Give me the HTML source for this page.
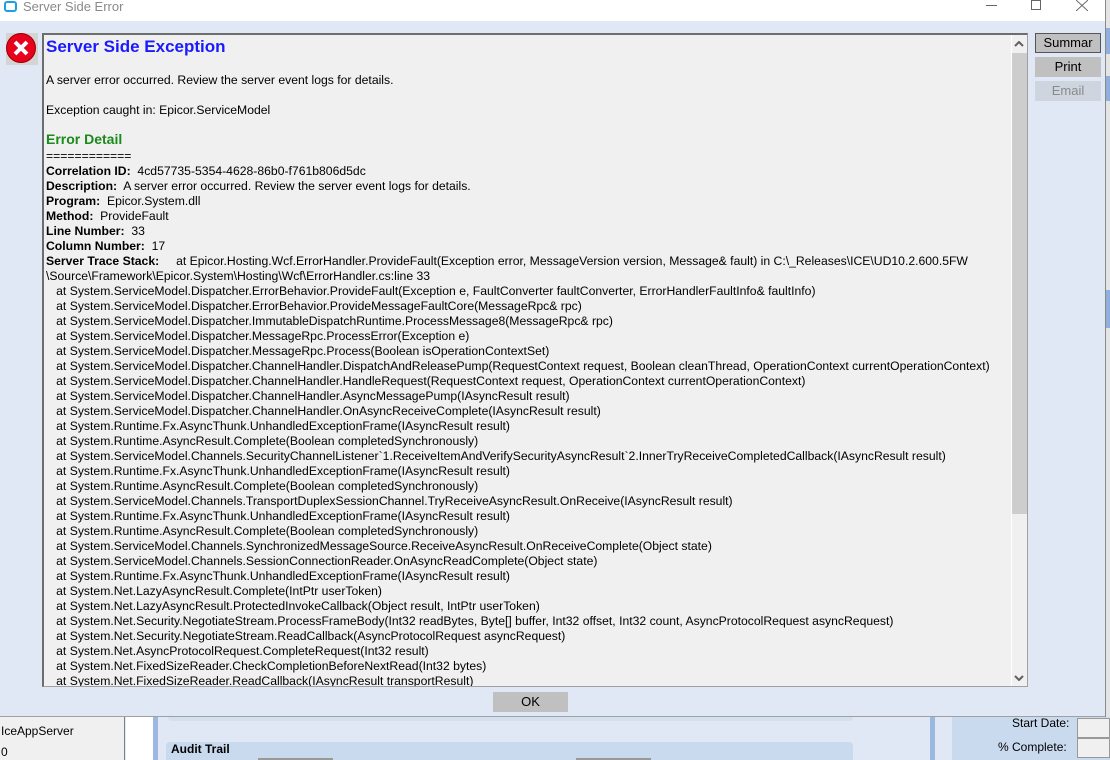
<!DOCTYPE html>
<html><head><meta charset="utf-8"><style>
*{margin:0;padding:0;box-sizing:border-box}
body{width:1110px;height:760px;overflow:hidden;position:relative;background:#dfe8f4;font-family:"Liberation Sans",Arial,sans-serif;font-size:12px;color:#000}
.a{position:absolute}
.box{left:42px;top:33px;width:986px;height:654px;background:#f0f0f0;border:1px solid #a0a0a0;border-top:2px solid #6d6d6d;border-left:2px solid #6d6d6d;overflow:hidden}
.tx{position:absolute;left:2px;white-space:nowrap;font-size:12.2px}
.fl{position:absolute;left:2px;top:114px;line-height:15px;white-space:pre;font-size:12.2px}
.fl b{font-weight:bold}
.btn{position:absolute;background:#c0c0c0;text-align:center;font-size:13px;line-height:19px}
</style></head><body>
<div class="a" style="left:0;top:0;width:1105px;height:21px;background:#fff"></div>
<div class="a" style="left:4px;top:1px;width:13px;height:11px;border:2px solid #1ba1e2;border-radius:3px;background:#fff"></div>
<div class="a" style="left:23px;top:-1px;font-size:13px;color:#8a8a8a">Server Side Error</div>
<div class="a" style="left:986px;top:5px;width:11px;height:1px;background:#666"></div>
<div class="a" style="left:1031px;top:0px;width:10px;height:10px;border:1px solid #666"></div>
<svg class="a" style="left:1076px;top:0" width="12" height="11"><path d="M0 0L12 11M12 0L0 11" stroke="#666" stroke-width="1"/></svg>
<div class="a" style="left:1105px;top:0;width:5px;height:717px;background:#e4e4e4;border-left:1px solid #8a8a8a"></div>
<div class="a" style="left:1106px;top:28px;width:4px;height:26px;background:#8fb0dc"></div>
<div class="a" style="left:1106px;top:76px;width:4px;height:25px;background:#8fb0dc"></div>
<div class="a" style="left:1106px;top:290px;width:4px;height:38px;background:#8fb0dc"></div>
<div class="a" style="left:6px;top:33px;width:32px;height:32px;background:#d4d4d4"></div>
<div class="a" style="left:6px;top:33px;width:30px;height:30px;border-radius:50%;background:#e8001c;border:1px solid #900"></div>
<svg class="a" style="left:6px;top:33px" width="30" height="30"><path d="M9 9L21 21M21 9L9 21" stroke="#fff" stroke-width="4"/></svg>
<div class="a box">
<div class="tx" style="top:2px;font-size:17px;font-weight:bold;color:#1a1aff">Server Side Exception</div>
<div class="tx" style="top:38px">A server error occurred. Review the server event logs for details.</div>
<div class="tx" style="top:68px">Exception caught in: Epicor.ServiceModel</div>
<div class="tx" style="top:96px;font-size:14px;font-weight:bold;color:#1a8a1a">Error Detail</div>
<div class="fl">============
<b>Correlation ID:</b>  4cd57735-5354-4628-86b0-f761b806d5dc
<b>Description:</b>  A server error occurred. Review the server event logs for details.
<b>Program:</b>  Epicor.System.dll
<b>Method:</b>  ProvideFault
<b>Line Number:</b>  33
<b>Column Number:</b>  17
<b>Server Trace Stack:</b>     at Epicor.Hosting.Wcf.ErrorHandler.ProvideFault(Exception error, MessageVersion version, Message&amp; fault) in C:\_Releases\ICE\UD10.2.600.5FW
\Source\Framework\Epicor.System\Hosting\Wcf\ErrorHandler.cs:line 33
   at System.ServiceModel.Dispatcher.ErrorBehavior.ProvideFault(Exception e, FaultConverter faultConverter, ErrorHandlerFaultInfo&amp; faultInfo)
   at System.ServiceModel.Dispatcher.ErrorBehavior.ProvideMessageFaultCore(MessageRpc&amp; rpc)
   at System.ServiceModel.Dispatcher.ImmutableDispatchRuntime.ProcessMessage8(MessageRpc&amp; rpc)
   at System.ServiceModel.Dispatcher.MessageRpc.ProcessError(Exception e)
   at System.ServiceModel.Dispatcher.MessageRpc.Process(Boolean isOperationContextSet)
   at System.ServiceModel.Dispatcher.ChannelHandler.DispatchAndReleasePump(RequestContext request, Boolean cleanThread, OperationContext currentOperationContext)
   at System.ServiceModel.Dispatcher.ChannelHandler.HandleRequest(RequestContext request, OperationContext currentOperationContext)
   at System.ServiceModel.Dispatcher.ChannelHandler.AsyncMessagePump(IAsyncResult result)
   at System.ServiceModel.Dispatcher.ChannelHandler.OnAsyncReceiveComplete(IAsyncResult result)
   at System.Runtime.Fx.AsyncThunk.UnhandledExceptionFrame(IAsyncResult result)
   at System.Runtime.AsyncResult.Complete(Boolean completedSynchronously)
   at System.ServiceModel.Channels.SecurityChannelListener`1.ReceiveItemAndVerifySecurityAsyncResult`2.InnerTryReceiveCompletedCallback(IAsyncResult result)
   at System.Runtime.Fx.AsyncThunk.UnhandledExceptionFrame(IAsyncResult result)
   at System.Runtime.AsyncResult.Complete(Boolean completedSynchronously)
   at System.ServiceModel.Channels.TransportDuplexSessionChannel.TryReceiveAsyncResult.OnReceive(IAsyncResult result)
   at System.Runtime.Fx.AsyncThunk.UnhandledExceptionFrame(IAsyncResult result)
   at System.Runtime.AsyncResult.Complete(Boolean completedSynchronously)
   at System.ServiceModel.Channels.SynchronizedMessageSource.ReceiveAsyncResult.OnReceiveComplete(Object state)
   at System.ServiceModel.Channels.SessionConnectionReader.OnAsyncReadComplete(Object state)
   at System.Runtime.Fx.AsyncThunk.UnhandledExceptionFrame(IAsyncResult result)
   at System.Net.LazyAsyncResult.Complete(IntPtr userToken)
   at System.Net.LazyAsyncResult.ProtectedInvokeCallback(Object result, IntPtr userToken)
   at System.Net.Security.NegotiateStream.ProcessFrameBody(Int32 readBytes, Byte[] buffer, Int32 offset, Int32 count, AsyncProtocolRequest asyncRequest)
   at System.Net.Security.NegotiateStream.ReadCallback(AsyncProtocolRequest asyncRequest)
   at System.Net.AsyncProtocolRequest.CompleteRequest(Int32 result)
   at System.Net.FixedSizeReader.CheckCompletionBeforeNextRead(Int32 bytes)
   at System.Net.FixedSizeReader.ReadCallback(IAsyncResult transportResult)</div>
<div class="a" style="left:967px;top:0;width:16px;height:652px;background:#f0f0f0;border-left:1px solid #fff"></div>
<div class="a" style="left:968px;top:18px;width:15px;height:461px;background:#cdcdcd"></div>
<svg class="a" style="left:970px;top:6px" width="10" height="6"><path d="M1 5L5 1L9 5" stroke="#606060" stroke-width="2" fill="none"/></svg>
<svg class="a" style="left:970px;top:640px" width="10" height="6"><path d="M1 1L5 5L9 1" stroke="#606060" stroke-width="2" fill="none"/></svg>
</div>
<div class="btn" style="left:1035px;top:33px;width:66px;height:20px;border:1px solid #555;line-height:18px">Summar</div>
<div class="btn" style="left:1035px;top:57px;width:66px;height:20px">Print</div>
<div class="btn" style="left:1035px;top:81px;width:66px;height:20px;background:#cfd5de;color:#8a8a8a">Email</div>
<div class="btn" style="left:493px;top:692px;width:75px;height:20px">OK</div>
<div class="a" style="left:0;top:716px;width:1105px;height:1px;background:#a0a0a0"></div>
<div class="a" style="left:0;top:717px;width:1110px;height:43px;background:#dfe8f4"></div>
<div class="a" style="left:0;top:717px;width:125px;height:43px;background:#f0f0f0;border-right:1px solid #808080"></div>
<div class="a" style="left:1px;top:724px;font-size:12px">IceAppServer</div>
<div class="a" style="left:1px;top:745px;font-size:12px">0</div>
<div class="a" style="left:126px;top:717px;width:27px;height:43px;background:#fff"></div>
<div class="a" style="left:153px;top:717px;width:5px;height:43px;background:#9ab8e0"></div>
<div class="a" style="left:168px;top:717px;width:685px;height:4px;background:#d3e0f0;border-radius:0 0 4px 4px"></div>
<div class="a" style="left:166px;top:742px;width:687px;height:18px;background:#c9d9ee;border-radius:4px 4px 0 0"></div>
<div class="a" style="left:171px;top:742px;font-size:12px;font-weight:bold">Audit Trail</div>
<div class="a" style="left:258px;top:758px;width:75px;height:2px;background:#fff;border:1px solid #999"></div>
<div class="a" style="left:576px;top:758px;width:75px;height:2px;background:#fff;border:1px solid #999"></div>
<div class="a" style="left:930px;top:717px;width:5px;height:43px;background:#9ab8e0"></div>
<div class="a" style="left:952px;top:717px;width:158px;height:43px;background:#c9d9ee"></div>
<div class="a" style="left:1012px;top:716px;font-size:12px">Start Date:</div>
<div class="a" style="left:998px;top:740px;font-size:12px">% Complete:</div>
<div class="a" style="left:1077px;top:718px;width:33px;height:20px;background:#f0f0f0;border:1px solid #999"></div>
<div class="a" style="left:1077px;top:738px;width:33px;height:20px;background:#f0f0f0;border:1px solid #999"></div>
</body></html>
